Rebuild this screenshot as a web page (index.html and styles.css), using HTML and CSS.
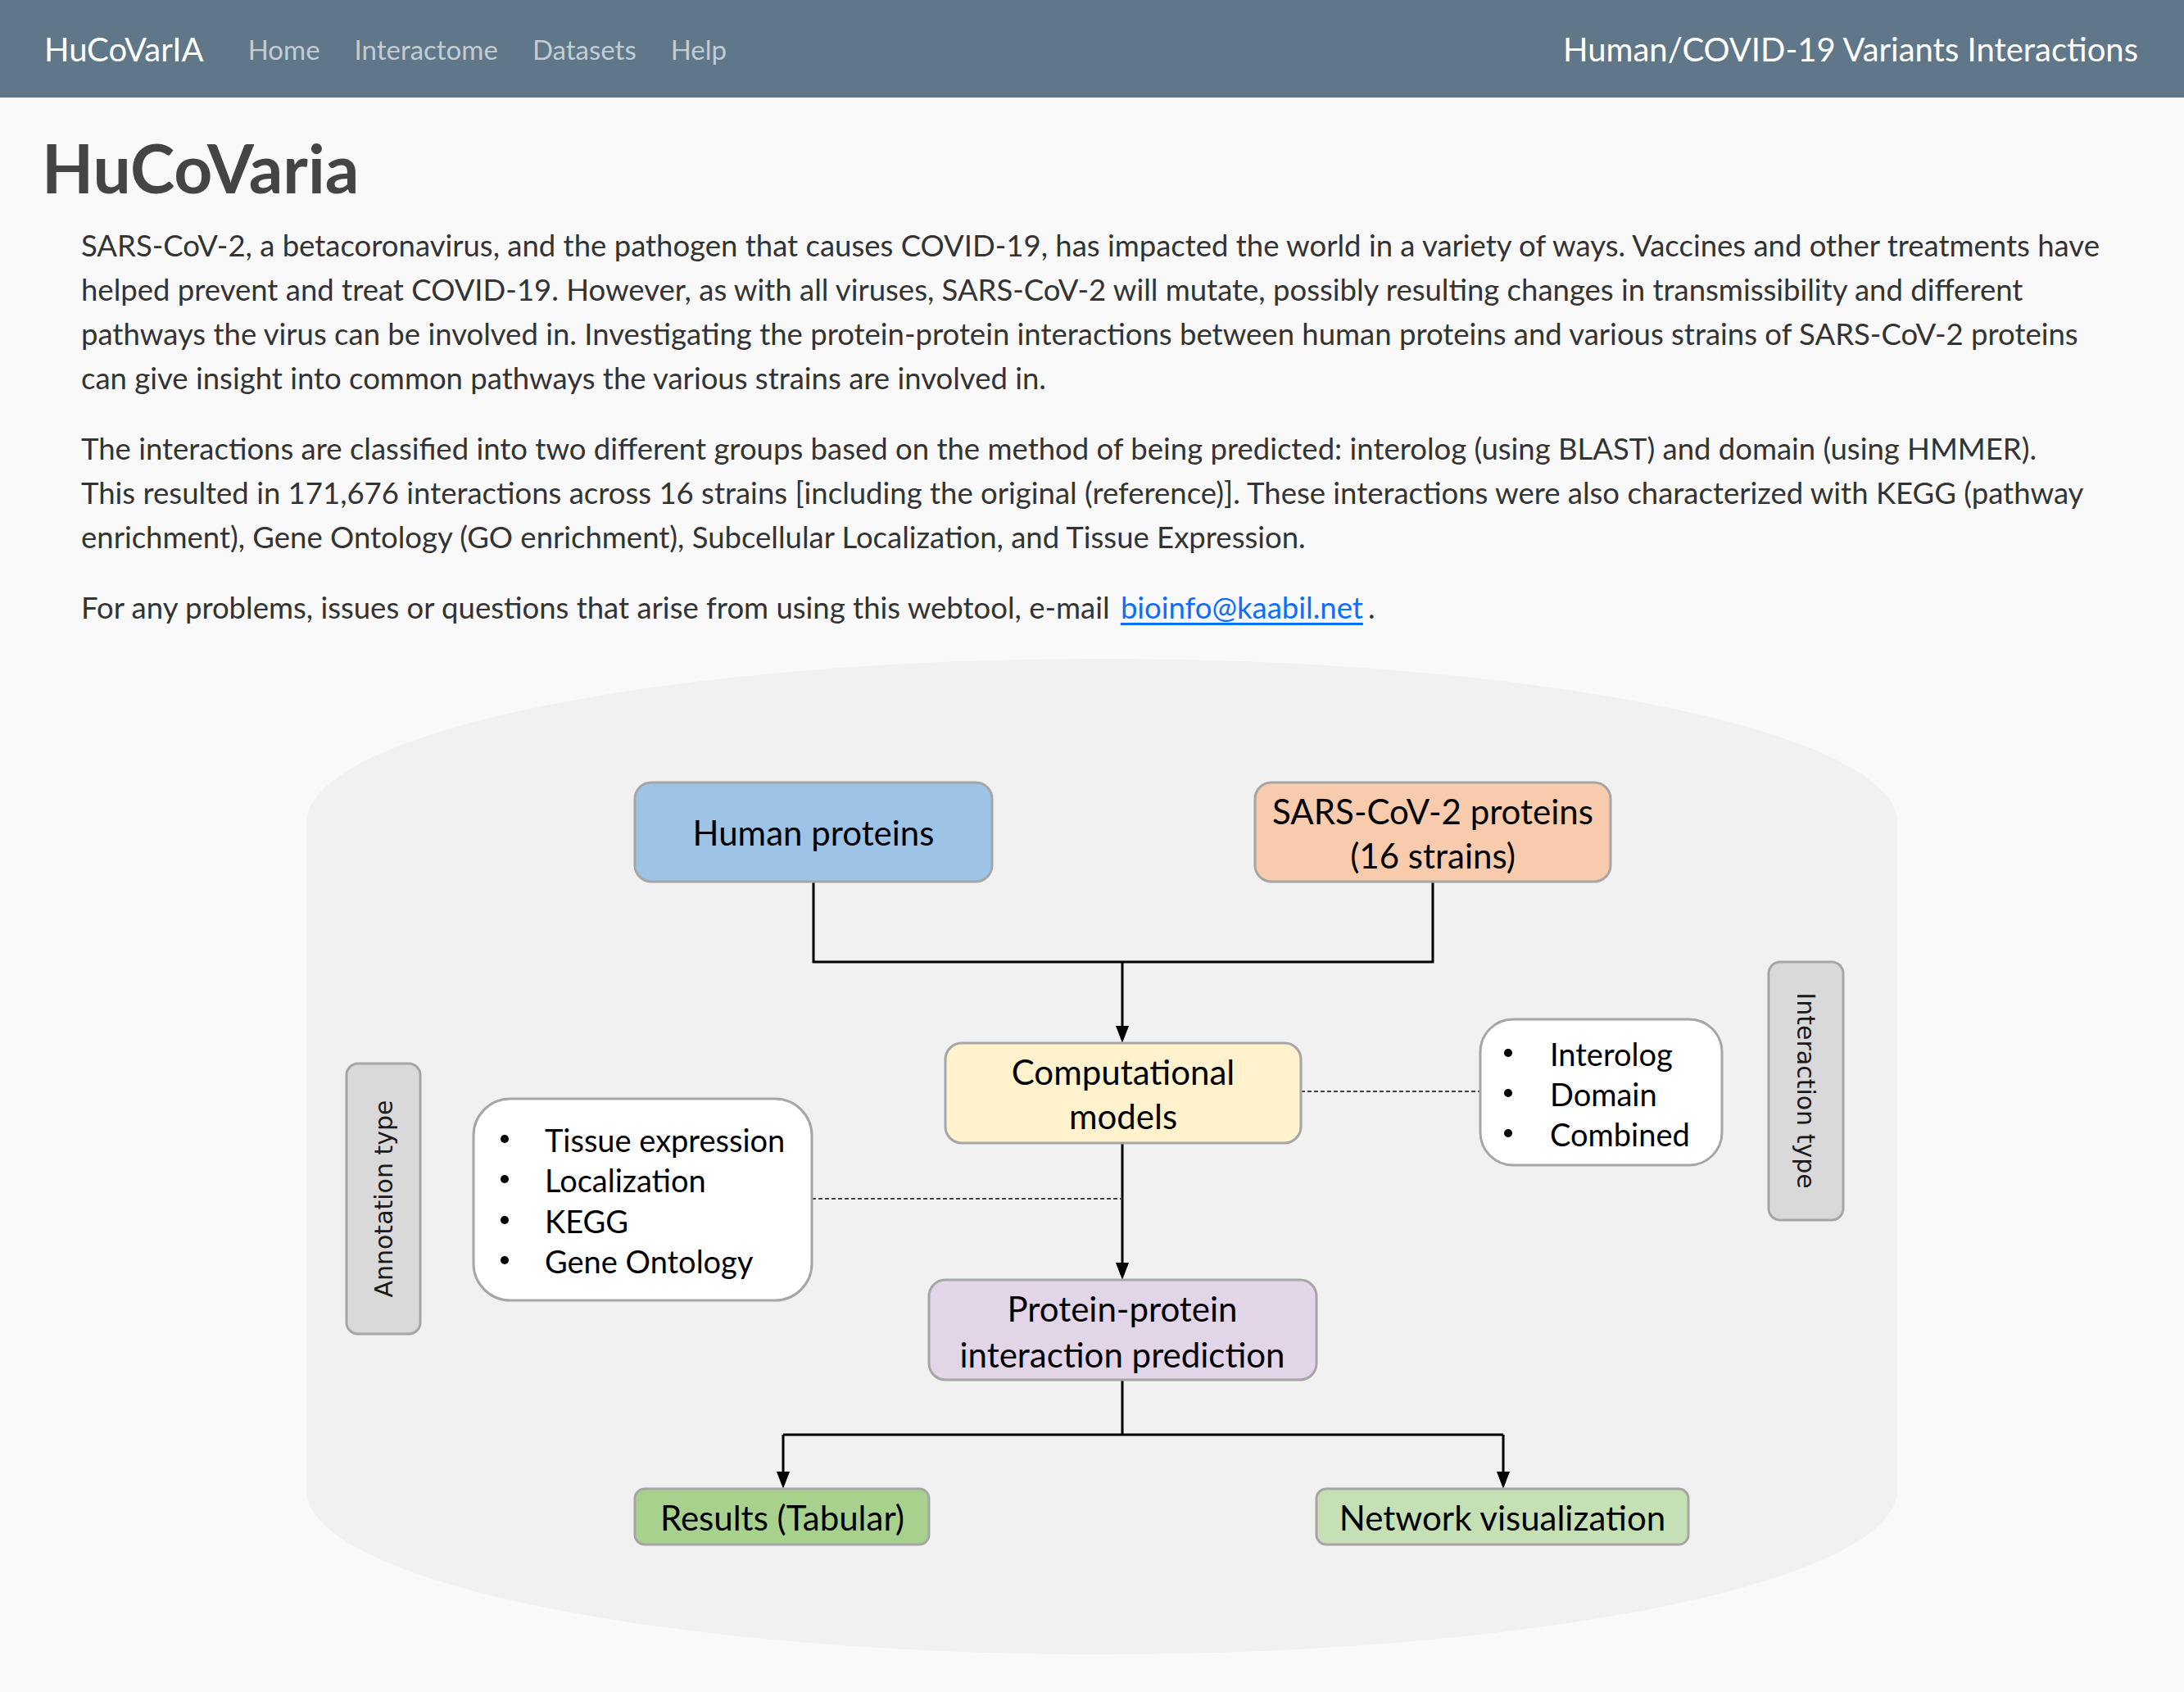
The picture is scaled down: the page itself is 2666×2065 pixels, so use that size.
FILE: index.html
```html
<!DOCTYPE html>
<html lang="en">
<head>
<meta charset="utf-8">
<title>HuCoVarIA</title>
<link rel="stylesheet" href="styles.css">
</head>
<body>
<nav class="navbar">
  <div class="nav-left">
    <a class="brand" href="#">HuCoVarIA</a>
    <ul class="nav-links">
      <li><a href="#">Home</a></li>
      <li><a href="#">Interactome</a></li>
      <li><a href="#">Datasets</a></li>
      <li><a href="#">Help</a></li>
    </ul>
  </div>
  <div class="nav-title">Human/COVID-19 Variants Interactions</div>
</nav>
<main class="content">
  <h1 class="page-title">HuCoVaria</h1>
  <div class="intro">
    <p>SARS-CoV-2, a betacoronavirus, and the pathogen that causes COVID-19, has impacted the world in a variety of ways. Vaccines and other treatments have helped prevent and treat COVID-19. However, as with all viruses, SARS-CoV-2 will mutate, possibly resulting changes in transmissibility and different pathways the virus can be involved in. Investigating the protein-protein interactions between human proteins and various strains of SARS-CoV-2 proteins can give insight into common pathways the various strains are involved in.</p>
    <p>The interactions are classified into two different groups based on the method of being predicted: interolog (using BLAST) and domain (using HMMER).<br>This resulted in 171,676 interactions across 16 strains [including the original (reference)]. These interactions were also characterized with KEGG (pathway enrichment), Gene Ontology (GO enrichment), Subcellular Localization, and Tissue Expression.</p>
    <p>For any problems, issues or questions that arise from using this webtool, e-mail <a class="mail" href="mailto:bioinfo@kaabil.net">bioinfo@kaabil.net</a>.</p>
  </div>
</main>
<figure class="workflow">
  <svg class="workflow-svg" viewBox="0 790 2666 1260" width="2666" height="1260" xmlns="http://www.w3.org/2000/svg">
    <path class="cyl" d="M374,1003 A971,200 0 0 1 2316,1003 L2316,1818 A971,200 0 0 1 374,1818 Z"/>

    <!-- connectors -->
    <path class="wire" d="M993,1075 V1173 H1749 V1075"/>
    <path class="wire" d="M1370,1173 V1254"/>
    <polygon class="head" points="1370,1272 1362,1251 1378,1251"/>
    <path class="wire" d="M1370,1394 V1543"/>
    <polygon class="head" points="1370,1561 1362,1540 1378,1540"/>
    <path class="wire" d="M1370,1683 V1750 M956,1750 H1835 M956,1750 V1798 M1835,1750 V1798"/>
    <polygon class="head" points="956,1816 948,1795 964,1795"/>
    <polygon class="head" points="1835,1816 1827,1795 1843,1795"/>
    <path class="dots" d="M1588,1331 H1807"/>
    <path class="dots" d="M991,1462 H1370"/>

    <!-- top boxes -->
    <rect class="box human" x="775" y="954" width="436" height="121" rx="20"/>
    <text class="node" x="993" y="1015">Human proteins</text>
    <rect class="box sars" x="1532" y="954" width="434" height="121" rx="20"/>
    <text class="node" x="1749" y="989">SARS-CoV-2 proteins</text>
    <text class="node" x="1749" y="1043">(16 strains)</text>

    <rect class="box model" x="1154" y="1272" width="434" height="122" rx="20"/>
    <text class="node" x="1371" y="1307">Computational</text>
    <text class="node" x="1371" y="1361">models</text>

    <rect class="box ppi" x="1134" y="1561" width="473" height="122" rx="20"/>
    <text class="node" x="1370" y="1596">Protein-protein</text>
    <text class="node" x="1370" y="1652">interaction prediction</text>

    <rect class="box tab" x="775" y="1816" width="359" height="68" rx="12"/>
    <text class="node" x="955" y="1851">Results (Tabular)</text>
    <rect class="box net" x="1607" y="1816" width="454" height="68" rx="12"/>
    <text class="node" x="1834" y="1851">Network visualization</text>

    <!-- interaction type list -->
    <rect class="box list" x="1807" y="1243" width="295" height="178" rx="40"/>
    <circle class="bullet" cx="1841" cy="1284" r="5"/>
    <circle class="bullet" cx="1841" cy="1333" r="5"/>
    <circle class="bullet" cx="1841" cy="1382" r="5"/>
    <text class="item" x="1892" y="1285">Interolog</text>
    <text class="item" x="1892" y="1334">Domain</text>
    <text class="item" x="1892" y="1383">Combined</text>

    <!-- annotation list -->
    <rect class="box list" x="578" y="1340" width="413" height="246" rx="45"/>
    <circle class="bullet" cx="616" cy="1389" r="5"/>
    <circle class="bullet" cx="616" cy="1438" r="5"/>
    <circle class="bullet" cx="616" cy="1488" r="5"/>
    <circle class="bullet" cx="616" cy="1537" r="5"/>
    <text class="item" x="665" y="1390">Tissue expression</text>
    <text class="item" x="665" y="1439">Localization</text>
    <text class="item" x="665" y="1489">KEGG</text>
    <text class="item" x="665" y="1538">Gene Ontology</text>

    <!-- side labels -->
    <rect class="box tag" x="2159" y="1173" width="91" height="315" rx="14"/>
    <text class="tag-text" transform="translate(2204 1330) rotate(90)">Interaction type</text>
    <rect class="box tag" x="423" y="1297" width="90" height="330" rx="14"/>
    <text class="tag-text" transform="translate(468 1462) rotate(-90)">Annotation type</text>
  </svg>
</figure>
</body>
</html>
```
FILE: styles.css
```css
html, body {
  margin: 0;
  padding: 0;
}
body {
  background: #f9f9f9;
  font-family: "Lato", "Liberation Sans", sans-serif;
  color: #333333;
  overflow: hidden;
}
.navbar {
  height: 119px;
  background: #607789;
  display: flex;
  align-items: center;
  justify-content: space-between;
  padding: 0 56px 0 54px;
  box-sizing: border-box;
}
.nav-left {
  display: flex;
  align-items: center;
}
.brand {
  color: #ffffff;
  font-size: 40px;
  text-decoration: none;
  margin-right: 54px;
}
.nav-links {
  list-style: none;
  margin: 0;
  padding: 0;
  display: flex;
  gap: 42px;
}
.nav-links a {
  color: #c3ccd3;
  font-size: 33px;
  text-decoration: none;
}
.nav-title {
  color: #ffffff;
  font-size: 40px;
}
.content {
  padding: 36px 66px 0 51px;
}
.page-title {
  margin: 0 0 19px 0;
  font-size: 82px;
  font-weight: 700;
  line-height: 1.2;
  color: #444444;
}
.intro {
  padding-left: 48px;
}
.intro p {
  margin: 0 0 32px 0;
  font-size: 36.5px;
  line-height: 54px;
}
.mail {
  color: #0d6efd;
  text-decoration: underline;
  text-underline-offset: 5px;
  margin: 0 6px 0 4px;
}
.workflow {
  margin: 0;
  padding: 0;
}
.workflow-svg {
  display: block;
  margin-top: -9px;
}
.cyl {
  fill: #f1f1f1;
}
.wire {
  fill: none;
  stroke: #000000;
  stroke-width: 3;
}
.head {
  fill: #000000;
}
.dots {
  fill: none;
  stroke: #444444;
  stroke-width: 2;
  stroke-dasharray: 5 3;
}
.box {
  stroke: #a6a6a6;
  stroke-width: 3;
}
.human { fill: #9dc3e6; }
.sars { fill: #f8cbad; }
.model { fill: #fff2cc; }
.ppi { fill: #e1d5e7; }
.tab { fill: #a9d18e; }
.net { fill: #c5e0b4; }
.list { fill: #ffffff; }
.tag { fill: #d9d9d9; }
.node {
  font-family: "Lato", "Liberation Sans", sans-serif;
  font-size: 42px;
  fill: #000000;
  text-anchor: middle;
  dominant-baseline: central;
}
.item {
  font-family: "Lato", "Liberation Sans", sans-serif;
  font-size: 38px;
  fill: #000000;
  dominant-baseline: central;
}
.bullet {
  fill: #000000;
}
.tag-text {
  font-family: "DejaVu Sans", "Liberation Sans", sans-serif;
  font-size: 30px;
  fill: #1a1a1a;
  text-anchor: middle;
  dominant-baseline: central;
}
```
